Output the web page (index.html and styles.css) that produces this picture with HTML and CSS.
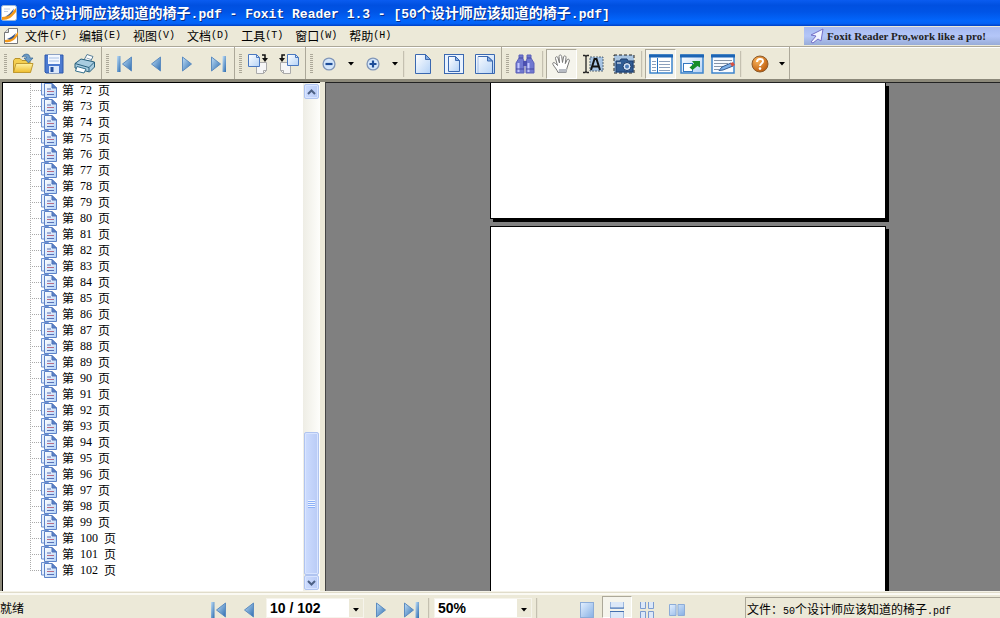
FILE: index.html
```html
<!DOCTYPE html>
<html lang="zh-CN">
<head>
<meta charset="utf-8">
<title>50个设计师应该知道的椅子.pdf - Foxit Reader 1.3</title>
<link rel="stylesheet" href="styles.css">
</head>
<body>
<svg class="defs" aria-hidden="true">
  <defs>
    <linearGradient id="blue" x1="0" y1="0" x2="1" y2="1"><stop offset="0" stop-color="#c0def6"/><stop offset="1" stop-color="#2c6cb0"/></linearGradient>
    <linearGradient id="paper" x1="0" y1="0" x2="1" y2="1"><stop offset="0" stop-color="#ffffff"/><stop offset="1" stop-color="#b4d2f6"/></linearGradient>
    <linearGradient id="gold" x1="0" y1="0" x2="0" y2="1"><stop offset="0" stop-color="#fff3a4"/><stop offset="1" stop-color="#eebc2c"/></linearGradient>
    <linearGradient id="tile" x1="0" y1="0" x2="1" y2="1"><stop offset="0" stop-color="#e4f0ff"/><stop offset="1" stop-color="#86b0e4"/></linearGradient>
    <radialGradient id="amber" cx=".35" cy=".3" r=".8"><stop offset="0" stop-color="#f9b45c"/><stop offset="1" stop-color="#b85404"/></radialGradient>
  </defs>
  <symbol id="logo" viewBox="0 0 16 16"><rect x=".5" y=".5" width="15" height="15" rx="2" fill="#fff" stroke="#9cb6d8"/><path d="M3 4h6M3 6.500h4" stroke="#c2cce0"/><path d="M1 15v-3c6 0 9-3 14-9v4c-4 5-7 8-14 8z" fill="#f49a1c"/><path d="M4 11.500c3-1 6-4 9-8l-1 3c-2 3-5 5-8 5z" fill="#34548c"/></symbol>
  <symbol id="doclogo" viewBox="0 0 16 16"><path d="M1.500 4.500l4-4h9v15h-13z" fill="#fff" stroke="#777"/><path d="M5.500.5v4h-4" fill="#ddd" stroke="#777"/><path d="M2 14v-2c5 0 9-3 13-8v3c-3 5-7 8-13 7z" fill="#f49a1c"/><path d="M4 11c3-1 6-3 9-6l-2 4c-2 2-4 3-7 2z" fill="#34548c"/></symbol>
  <symbol id="pages" viewBox="0 0 16 16"><path d="M.5.5h7l2 2v10.500h-9z" fill="#e6effc" stroke="#6c90d0"/><path d="M3.500 1.500h7.500l4.500 4.500v9.500h-12z" fill="url(#paper)" stroke="#5c82c8"/><path d="M11 1.500v4.500h4.500z" fill="#5c82c8" stroke="#4c72b8"/><path d="M6 7h4M6 12.500h7" stroke="#5870b8"/><path d="M6 9.500h7" stroke="#b86c84"/></symbol>
  <symbol id="open" viewBox="0 0 22 22"><path d="M1.500 19.500v-12l1.500-2h5l2 2h8v12z" fill="#f4cf50" stroke="#b8922c"/><path d="M1.500 19.500l2.500-9h17l-2.500 9z" fill="url(#gold)" stroke="#c09a30"/><path d="M10 4c2-4 8-4 8 1h3l-4.500 5-4.500-5h2.500c0-2-2-2.500-4.500-1z" fill="#6c9cc8" stroke="#346494" stroke-width=".7"/></symbol>
  <symbol id="save" viewBox="0 0 20 20"><path d="M1 1h18v18h-17l-1-1z" fill="#4c7ad0" stroke="#2c58ac"/><rect x="4" y="1" width="12" height="9" fill="#f2f7ff"/><path d="M5 4h10M5 7h10" stroke="#a8c0e4"/><rect x="5" y="12" width="10" height="7" fill="#dce8fa"/><rect x="6.500" y="13" width="3" height="5" fill="#2450a0"/></symbol>
  <symbol id="print" viewBox="0 0 22 20"><path d="M10 6l3-5.500 6 2-2.500 5z" fill="#fff" stroke="#5a8098"/><path d="M12.500 4l4.500 1.500" stroke="#90a8b8"/><path d="M1 9.500l6-4.500 13.500 3v5l-5 5-14.500-4z" fill="#a8cce0" stroke="#28607c"/><path d="M1 9.500l14 4 5.500-5.500" fill="none" stroke="#28607c"/><path d="M15 13.500v4" stroke="#28607c"/><path d="M3 12.500l9 2.500-2 4-8.500-2z" fill="#fff" stroke="#34708c"/></symbol>
  <symbol id="first" viewBox="0 0 16 16"><rect x="0" y="0" width="3.500" height="16" fill="url(#blue)"/><path d="M14.500 1v14l-9-7z" fill="url(#blue)" stroke="#5c8cc0"/></symbol>
  <symbol id="prev" viewBox="0 0 16 16"><path d="M12.500 1v14l-9-7z" fill="url(#blue)" stroke="#5c8cc0"/></symbol>
  <symbol id="next" viewBox="0 0 16 16"><path d="M3.500 1v14l9-7z" fill="url(#blue)" stroke="#5c8cc0"/></symbol>
  <symbol id="last" viewBox="0 0 16 16"><rect x="12.500" y="0" width="3.500" height="16" fill="url(#blue)"/><path d="M1.500 1v14l9-7z" fill="url(#blue)" stroke="#5c8cc0"/></symbol>
  <symbol id="rotr" viewBox="0 0 22 22"><path d="M9.500 9.500h10v8l-3 3h-7z" fill="#f6f6f6" stroke="#aaa"/><path d="M16.500 20.500v-3h3" fill="none" stroke="#aaa"/><path d="M1.500 1.500h8l3 3v9h-11z" fill="url(#paper)" stroke="#4a78c0"/><path d="M9.500 1.500v3h3" fill="none" stroke="#4a78c0"/><path d="M15 2h3v4" fill="none" stroke="#111" stroke-width="1.500"/><path d="M15 5h6l-3 4z" fill="#111"/></symbol>
  <symbol id="rotl" viewBox="0 0 22 22"><path d="M2.500 9.500h10v11h-7l-3-3z" fill="#f6f6f6" stroke="#aaa"/><path d="M2.500 17.500h3v3" fill="none" stroke="#aaa"/><path d="M9.500 1.500h8l3 3v8h-11z" fill="url(#paper)" stroke="#4a78c0"/><path d="M17.500 1.500v3h3" fill="none" stroke="#4a78c0"/><path d="M7 2h-3v4" fill="none" stroke="#111" stroke-width="1.500"/><path d="M1 5h6l-3 4z" fill="#111"/></symbol>
  <symbol id="minus" viewBox="0 0 16 16"><circle cx="8" cy="8" r="6.800" fill="#d4e6fa" stroke="#8096b8" stroke-width="1.500"/><path d="M4 8h8" stroke="#1c4c98" stroke-width="2.500"/></symbol>
  <symbol id="plus" viewBox="0 0 16 16"><circle cx="8" cy="8" r="6.800" fill="#d4e6fa" stroke="#8096b8" stroke-width="1.500"/><path d="M4 8h8M8 4v8" stroke="#1c4c98" stroke-width="2.500"/></symbol>
  <symbol id="actual" viewBox="0 0 20 22"><path d="M2.500 1.500h10l5 5v14h-15z" fill="url(#paper)" stroke="#3a68b0"/><path d="M12.500 1.500v5h5z" fill="#86aee4" stroke="#3a68b0"/></symbol>
  <symbol id="fitpage" viewBox="0 0 20 22"><rect x=".5" y="1.500" width="19" height="19" fill="#e8f2ff" stroke="#3a68b0"/><path d="M4.500 3.500h7l4 4v11h-11z" fill="url(#paper)" stroke="#3a68b0"/><path d="M11.500 3.500v4h4z" fill="#86aee4" stroke="#3a68b0"/></symbol>
  <symbol id="fitwidth" viewBox="0 0 20 22"><path d="M.5 1.500h19v19h-19z" fill="url(#paper)" stroke="#3a68b0"/><path d="M3 3.500h10l4.500 4.500v12" fill="none" stroke="#3a68b0"/><path d="M3 3.500v16.500" stroke="#a8c0e8"/><path d="M12.500 3.500v4.500h5z" fill="#86aee4" stroke="#3a68b0"/></symbol>
  <symbol id="find" viewBox="0 0 20 20"><path d="M4 1h4v4l1 2v12h-8v-10l3-5zM12 1h4v3l3 5v10h-8v-12l1-2z" fill="#7078d0" stroke="#5c60b8"/><path d="M8 7h4v5h-4z" fill="#4c50b0"/><path d="M3.500 9v9M13.500 9v9" stroke="#c4c8ff" stroke-width="2"/><path d="M1 15h8M11 15h8M4 4h4M12 4h4" stroke="#4448a0"/></symbol>
  <symbol id="hand" viewBox="0 0 20 20"><path d="M6 18.500c-1-3-4-6-5-8s1-2.500 2.500-1l2 2-2-7c-.5-2 2-2.500 2.500-.5l1.500 5-.5-6.500c0-2 2.500-2 2.700 0l.8 6 1-5.500c.5-1.800 2.800-1.200 2.500.6l-.7 6 1.700-3.600c1-1.600 3-.6 2.300 1l-2.300 7-1 4.500z" fill="#fff" stroke="#777"/><path d="M7 15h8l-.5 3.500h-8z" fill="#b8bcc4"/></symbol>
  <symbol id="textsel" viewBox="0 0 22 20"><path d="M1 1.500h2l1 1 1-1h2M4 2v16M1 18.500h2l1-1 1 1h2" fill="none" stroke="#222" stroke-width="1.300"/><rect x="8" y="3" width="13" height="14" fill="#a6c4e4" stroke="#567" stroke-dasharray="2 1"/><path d="M9 16l3.500-11h2l3.500 11M11 12.500h6" fill="none" stroke="#111" stroke-width="2"/></symbol>
  <symbol id="snapshot" viewBox="0 0 22 20"><rect x="1" y="1" width="20" height="18" fill="#a8c4e0" stroke="#222" stroke-dasharray="3 2"/><path d="M3 7h4l1-2h6l1 2h5v11h-17z" fill="#305c94" stroke="#1c3c6c"/><circle cx="14" cy="12.500" r="4" fill="#dce8f8" stroke="#183868"/><circle cx="14" cy="12.500" r="2" fill="#4c7cb8"/><path d="M4 9h4" stroke="#fff"/></symbol>
  <symbol id="bookmark" viewBox="0 0 24 20"><rect x="1" y="1" width="22" height="18" fill="#fff" stroke="#3c84cc" stroke-width="1.500"/><path d="M0 2h24" stroke="#1c64b4" stroke-width="3"/><path d="M8.500 4v15" stroke="#2470c0"/><path d="M3 7.500h4M3 10.500h4M3 13.500h4M3 16.500h4M10 7.500h11M10 10.500h11M10 13.500h11M10 16.500h11" stroke="#8ca0bc"/></symbol>
  <symbol id="fullscreen" viewBox="0 0 24 20"><rect x="1" y="1" width="22" height="18" fill="url(#paper)" stroke="#3c84cc" stroke-width="1.500"/><path d="M0 2h24" stroke="#1c64b4" stroke-width="3"/><rect x="3.500" y="9.500" width="9" height="8" fill="#fff" stroke="#3478c0"/><path d="M9.500 13.500l4.500-4-2-2.500h8v6.500l-2.500-1.500-5 4z" fill="#148c28"/></symbol>
  <symbol id="edit" viewBox="0 0 24 20"><rect x="1" y="1" width="22" height="18" fill="#f6faff" stroke="#3c84cc" stroke-width="1.500"/><path d="M0 2h24" stroke="#1c64b4" stroke-width="3"/><path d="M3 6.500h18M3 9.500h14M3 12.500h9M3 15.500h5" stroke="#8494a8"/><path d="M8 16.500l3-3.500 9-4 2 3-10 4z" fill="#7cb0e8" stroke="#345c94"/><path d="M19 9.500l3-1.500 2 3-3 1.500z" fill="#d85040"/></symbol>
  <symbol id="help" viewBox="0 0 18 18"><circle cx="9" cy="9" r="8" fill="url(#amber)" stroke="#8c5c2c"/><path d="M6 7c0-4 6-4 6-.8 0 2.200-3 2.300-3 4.800" fill="none" stroke="#fff" stroke-width="2"/><circle cx="9" cy="13.600" r="1.300" fill="#fff"/></symbol>
  <symbol id="drop" viewBox="0 0 8 4"><path d="M1 0h6l-3 3.500z" fill="#000"/></symbol>
  <symbol id="arrow" viewBox="0 0 14 16"><path d="M13 1l-2 12-3-2-5 4-2-1 5-6-5-1z" fill="#f2f4ff" stroke="#7470c8"/></symbol>
  <symbol id="up" viewBox="0 0 9 6"><path d="M1 5l3.500-3.500 3.500 3.500" fill="none" stroke="#4d6185" stroke-width="2"/></symbol>
  <symbol id="down" viewBox="0 0 9 6"><path d="M1 1l3.500 3.500 3.500-3.500" fill="none" stroke="#4d6185" stroke-width="2"/></symbol>
  <symbol id="single" viewBox="0 0 16 16"><rect x="1.500" y=".5" width="13" height="15" fill="url(#tile)" stroke="#8cacd8"/></symbol>
  <symbol id="contin" viewBox="0 0 16 16"><path d="M1.500 0v6.500h13v-6.500M1.500 16v-6.500h13v6.500" fill="#dce8f8" stroke="#9cb8e0"/><path d="M1 6h14M1 9.500h14" stroke="#4470b0"/></symbol>
  <symbol id="facingc" viewBox="0 0 16 16"><path d="M1.500 0v6.500h5v-6.500M9.500 0v6.500h5v-6.500M1.500 16v-6.500h5v6.500M9.500 16v-6.500h5v6.500" fill="#dce8f8" stroke="#7c9cd0"/></symbol>
  <symbol id="facing" viewBox="0 0 16 16"><path d="M.5 2.500h6.500v11h-6.500zM9 2.500h6.500v11h-6.500z" fill="url(#tile)" stroke="#8cacd8"/></symbol>
</svg>

<header class="titlebar">
  <svg class="i16"><use href="#logo"/></svg>
  <h1>50<span class="zh">个设计师应该知道的椅子</span>.pdf - Foxit Reader 1.3 - [50<span class="zh">个设计师应该知道的椅子</span>.pdf]</h1>
</header>

<nav class="menubar">
  <svg class="i16"><use href="#doclogo"/></svg>
  <button><span class="zh">文件</span>(F)</button>
  <button><span class="zh">编辑</span>(E)</button>
  <button><span class="zh">视图</span>(V)</button>
  <button><span class="zh">文档</span>(D)</button>
  <button><span class="zh">工具</span>(T)</button>
  <button><span class="zh">窗口</span>(W)</button>
  <button><span class="zh">帮助</span>(H)</button>
  <a class="promo" href="#"><svg class="i16"><use href="#arrow"/></svg>Foxit Reader Pro,work like a pro!</a>
</nav>

<div class="toolbar">
  <div class="group">
    <i class="grip"></i>
    <button aria-label="打开"><svg class="i22"><use href="#open"/></svg></button>
    <button aria-label="保存"><svg class="i20"><use href="#save"/></svg></button>
    <button aria-label="打印"><svg class="i22"><use href="#print"/></svg></button>
  </div>
  <div class="group">
    <i class="grip"></i>
    <button aria-label="首页"><svg class="i16"><use href="#first"/></svg></button>
    <button aria-label="上一页"><svg class="i16"><use href="#prev"/></svg></button>
    <button aria-label="下一页"><svg class="i16"><use href="#next"/></svg></button>
    <button aria-label="末页"><svg class="i16"><use href="#last"/></svg></button>
  </div>
  <div class="group">
    <i class="grip"></i>
    <button aria-label="顺时针旋转"><svg class="i22"><use href="#rotr"/></svg></button>
    <button aria-label="逆时针旋转"><svg class="i22"><use href="#rotl"/></svg></button>
  </div>
  <div class="group">
    <i class="grip"></i>
    <button aria-label="缩小"><svg class="i14"><use href="#minus"/></svg></button>
    <button class="more" aria-label="缩小选项"><svg class="caret"><use href="#drop"/></svg></button>
    <button aria-label="放大"><svg class="i14"><use href="#plus"/></svg></button>
    <button class="more" aria-label="放大选项"><svg class="caret"><use href="#drop"/></svg></button>
    <i class="sep"></i>
    <button aria-label="实际大小"><svg class="i22"><use href="#actual"/></svg></button>
    <button aria-label="适合页面"><svg class="i22"><use href="#fitpage"/></svg></button>
    <button aria-label="适合宽度"><svg class="i22"><use href="#fitwidth"/></svg></button>
  </div>
  <div class="group">
    <i class="grip"></i>
    <button aria-label="查找"><svg class="i20"><use href="#find"/></svg></button>
    <i class="sep"></i>
    <button class="on" aria-label="手形工具"><svg class="i20"><use href="#hand"/></svg></button>
    <button aria-label="选择文本"><svg class="i22"><use href="#textsel"/></svg></button>
    <button aria-label="快照"><svg class="i22"><use href="#snapshot"/></svg></button>
    <i class="sep"></i>
    <button class="on" aria-label="书签"><svg class="i24"><use href="#bookmark"/></svg></button>
    <button aria-label="全屏"><svg class="i24"><use href="#fullscreen"/></svg></button>
    <button aria-label="编辑"><svg class="i24"><use href="#edit"/></svg></button>
    <i class="sep"></i>
    <button aria-label="帮助"><svg class="i18"><use href="#help"/></svg></button>
    <button class="more" aria-label="帮助选项"><svg class="caret"><use href="#drop"/></svg></button>
  </div>
</div>

<main class="workspace">
  <aside class="outline">
    <ul class="tree">
      <li><svg class="i16"><use href="#pages"/></svg><span>第</span><b>72</b><span>页</span></li>
      <li><svg class="i16"><use href="#pages"/></svg><span>第</span><b>73</b><span>页</span></li>
      <li><svg class="i16"><use href="#pages"/></svg><span>第</span><b>74</b><span>页</span></li>
      <li><svg class="i16"><use href="#pages"/></svg><span>第</span><b>75</b><span>页</span></li>
      <li><svg class="i16"><use href="#pages"/></svg><span>第</span><b>76</b><span>页</span></li>
      <li><svg class="i16"><use href="#pages"/></svg><span>第</span><b>77</b><span>页</span></li>
      <li><svg class="i16"><use href="#pages"/></svg><span>第</span><b>78</b><span>页</span></li>
      <li><svg class="i16"><use href="#pages"/></svg><span>第</span><b>79</b><span>页</span></li>
      <li><svg class="i16"><use href="#pages"/></svg><span>第</span><b>80</b><span>页</span></li>
      <li><svg class="i16"><use href="#pages"/></svg><span>第</span><b>81</b><span>页</span></li>
      <li><svg class="i16"><use href="#pages"/></svg><span>第</span><b>82</b><span>页</span></li>
      <li><svg class="i16"><use href="#pages"/></svg><span>第</span><b>83</b><span>页</span></li>
      <li><svg class="i16"><use href="#pages"/></svg><span>第</span><b>84</b><span>页</span></li>
      <li><svg class="i16"><use href="#pages"/></svg><span>第</span><b>85</b><span>页</span></li>
      <li><svg class="i16"><use href="#pages"/></svg><span>第</span><b>86</b><span>页</span></li>
      <li><svg class="i16"><use href="#pages"/></svg><span>第</span><b>87</b><span>页</span></li>
      <li><svg class="i16"><use href="#pages"/></svg><span>第</span><b>88</b><span>页</span></li>
      <li><svg class="i16"><use href="#pages"/></svg><span>第</span><b>89</b><span>页</span></li>
      <li><svg class="i16"><use href="#pages"/></svg><span>第</span><b>90</b><span>页</span></li>
      <li><svg class="i16"><use href="#pages"/></svg><span>第</span><b>91</b><span>页</span></li>
      <li><svg class="i16"><use href="#pages"/></svg><span>第</span><b>92</b><span>页</span></li>
      <li><svg class="i16"><use href="#pages"/></svg><span>第</span><b>93</b><span>页</span></li>
      <li><svg class="i16"><use href="#pages"/></svg><span>第</span><b>94</b><span>页</span></li>
      <li><svg class="i16"><use href="#pages"/></svg><span>第</span><b>95</b><span>页</span></li>
      <li><svg class="i16"><use href="#pages"/></svg><span>第</span><b>96</b><span>页</span></li>
      <li><svg class="i16"><use href="#pages"/></svg><span>第</span><b>97</b><span>页</span></li>
      <li><svg class="i16"><use href="#pages"/></svg><span>第</span><b>98</b><span>页</span></li>
      <li><svg class="i16"><use href="#pages"/></svg><span>第</span><b>99</b><span>页</span></li>
      <li><svg class="i16"><use href="#pages"/></svg><span>第</span><b>100</b><span>页</span></li>
      <li><svg class="i16"><use href="#pages"/></svg><span>第</span><b>101</b><span>页</span></li>
      <li><svg class="i16"><use href="#pages"/></svg><span>第</span><b>102</b><span>页</span></li>
    </ul>
    <div class="scrollbar">
      <button aria-label="向上滚动"><svg class="chev"><use href="#up"/></svg></button>
      <div class="track"><div class="thumb"><i></i></div></div>
      <button aria-label="向下滚动"><svg class="chev"><use href="#down"/></svg></button>
    </div>
  </aside>
  <section class="viewer">
    <div class="page tail"></div>
    <div class="page"></div>
  </section>
</main>

<footer class="status">
  <p class="ready">就绪</p>
  <div class="nav">
    <button aria-label="首页"><svg class="i16"><use href="#first"/></svg></button>
    <button aria-label="上一页"><svg class="i16"><use href="#prev"/></svg></button>
    <label class="combo"><select aria-label="页码"><option>10 / 102</option></select><svg class="caret"><use href="#drop"/></svg></label>
    <button aria-label="下一页"><svg class="i16"><use href="#next"/></svg></button>
    <button aria-label="末页"><svg class="i16"><use href="#last"/></svg></button>
    <i class="sep"></i>
    <label class="combo"><select aria-label="缩放"><option>50%</option></select><svg class="caret"><use href="#drop"/></svg></label>
    <i class="sep"></i>
  </div>
  <div class="views">
    <button aria-label="单页"><svg class="i16"><use href="#single"/></svg></button>
    <button class="on" aria-label="连续"><svg class="i16"><use href="#contin"/></svg></button>
    <button aria-label="连续对开"><svg class="i16"><use href="#facingc"/></svg></button>
    <button aria-label="对开"><svg class="i16"><use href="#facing"/></svg></button>
  </div>
  <p class="file"><span class="zh">文件：</span>50<span class="zh">个设计师应该知道的椅子</span>.pdf</p>
</footer>
</body>
</html>
```
FILE: styles.css
```css
* { box-sizing: border-box; }

body {
  margin: 0;
  height: 100vh;
  display: flex;
  flex-direction: column;
  overflow: hidden;
  background: #ece9d8;
  color: #000;
  font: 10px/16px "Liberation Mono", "Noto Sans CJK SC", monospace;
}

h1, p, ul { margin: 0; padding: 0; }
svg { display: block; flex: none; }
.defs { position: absolute; width: 0; height: 0; }

button {
  display: flex;
  align-items: center;
  justify-content: center;
  flex: none;
  margin: 0;
  padding: 0;
  border: 0;
  background: none;
  color: inherit;
  font: inherit;
}

.zh { font-size: 12px; font-family: "Noto Sans CJK SC", sans-serif; }

.i14 { width: 14px; height: 14px; }
.i16 { width: 16px; height: 16px; }
.i18 { width: 18px; height: 18px; }
.i20 { width: 20px; height: 20px; }
.i22 { width: 22px; height: 22px; }
.i24 { width: 24px; height: 20px; }
.caret { width: 8px; height: 4px; }
.chev { width: 9px; height: 6px; }

/* Title bar */
.titlebar {
  flex: none;
  display: flex;
  align-items: center;
  gap: 4px;
  height: 26px;
  padding-left: 1px;
  background: linear-gradient(#0a5cf0, #0050e0 20%, #0054e6 45%, #0266fc 80%, #0262f6 90%, #0040c4);
  color: #fff;
}
.titlebar h1 {
  font-size: 13px;
  line-height: 20px;
  font-weight: bold;
  white-space: pre;
  text-shadow: 1px 1px 0 #0b2f87;
}
.titlebar .zh { font-size: 14px; }

/* Menu bar */
.menubar {
  flex: none;
  display: flex;
  align-items: center;
  gap: 12px;
  height: 20px;
  padding-left: 3px;
}
.menubar > .i16 { margin-right: -6px; }
.promo {
  display: flex;
  align-items: center;
  gap: 2px;
  width: 196px;
  height: 18px;
  margin-left: auto;
  padding-left: 5px;
  background: linear-gradient(#a6baf0, #b4c6f8 50%, #98acd8);
  color: #222;
  font: bold 11px/16px "Liberation Serif", serif;
  text-decoration: none;
  white-space: nowrap;
}

/* Toolbar */
.toolbar {
  flex: none;
  display: flex;
  height: 33px;
  border-top: 1px solid #aca899;
  box-shadow: inset 0 1px #fff;
}
.group {
  display: flex;
  align-items: center;
  padding-top: 1px;
  border-right: 1px solid #aca899;
}
.group button { width: 31px; height: 30px; }
.group .more { width: 13px; }
.grip {
  width: 3px;
  height: 20px;
  margin: 0 0 0 4px;
  background: repeating-linear-gradient(#aca899 0 1px, #ece9d8 1px 2px);
}
.group::after { content: ""; width: 1px; }
.sep {
  flex: none;
  width: 2px;
  height: 26px;
  margin: 0 2px;
  border-left: 1px solid #c4c0b0;
  border-right: 1px solid #e4e0d0;
}
button.on {
  border: 1px solid;
  border-color: #aca899 #fff #fff #aca899;
  background: #f5f4ec;
}

/* Workspace */
.workspace {
  flex: 1;
  min-height: 0;
  display: flex;
  border-top: 3px solid #8c897a;
  border-bottom: 1px solid #f4f2e8;
}
.outline {
  flex: none;
  width: 320px;
  display: flex;
  border-left: 2px solid #8c897a;
  box-shadow: inset 1px 1px #000;
  background: #fff;
  background-clip: padding-box;
  padding: 1px 0 0 1px;
}
.tree {
  flex: 1;
  display: flex;
  flex-direction: column;
  justify-content: flex-end;
  overflow: hidden;
  padding: 0 0 13px 27px;
  list-style: none;
}
.tree li {
  flex: none;
  display: flex;
  align-items: center;
  gap: 6px;
  height: 16px;
  background: repeating-linear-gradient(#aaa 0 1px, #fff 1px 2px) left / 1px 100% no-repeat;
}
.tree li:last-child { background-size: 1px 8px; background-position: left top; }
.tree li::before {
  content: "";
  width: 11px;
  height: 1px;
  margin-right: -6px;
  background: repeating-linear-gradient(90deg, #aaa 0 1px, #fff 1px 2px);
}
.tree .i16 { margin-right: -1px; }
.tree span { font: 12px/16px "Noto Sans CJK SC", sans-serif; }
.tree b { font: 12px/16px "Liberation Serif", serif; }

.scrollbar {
  width: 17px;
  display: flex;
  flex-direction: column;
  padding: 1px;
  background: linear-gradient(90deg, #eeede5, #fefefb);
}
.scrollbar button, .thumb {
  border: 1px solid #b0c4f0;
  border-radius: 2px;
  background: linear-gradient(90deg, #cddcfe, #b9cbf6);
  box-shadow: inset 0 0 0 1px #d8e4ff;
}
.scrollbar button { height: 15px; }
.track { flex: 1; display: flex; flex-direction: column; justify-content: flex-end; }
.thumb { height: 30%; display: flex; align-items: center; justify-content: center; }
.thumb i {
  width: 7px;
  height: 8px;
  background: repeating-linear-gradient(#eef4fe 0 1px, #8cb0f8 1px 2px);
}

.viewer {
  flex: 1;
  display: flex;
  flex-direction: column;
  gap: 7px;
  overflow: hidden;
  margin-left: 5px;
  padding-left: 164px;
  border-left: 1px solid #444;
  border-top: 1px solid #222;
  background: #808080;
}
.page {
  flex: none;
  width: 396px;
  height: 560px;
  border: 1px solid #000;
  background: #fff;
  box-shadow: 3px 3px 0 #000;
}
.tail { height: 136px; border-top: 0; }

/* Status bar */
.status {
  flex: none;
  display: flex;
  align-items: stretch;
  height: 26px;
  padding-top: 3px;
  border-top: 1px solid #e0dcca;
  box-shadow: inset 0 2px #fbfaf4;
}
.ready { width: 204px; padding-top: 6px; font-size: 12px; }
.nav { display: flex; align-items: stretch; padding-top: 2px; }
.nav button { width: 30px; padding-top: 4px; }
.nav .sep { height: auto; margin: 0 2px; }
.combo {
  position: relative;
  display: flex;
  width: 98px;
  margin: 0 2px;
  border: 1px solid #f6f4ec;
}
.combo select {
  appearance: none;
  flex: 1;
  padding: 0 18px 0 3px;
  border: 0;
  border-radius: 0;
  background: linear-gradient(90deg, #fff calc(100% - 14px), #ece9d8 0);
  color: #000;
  font: bold 14px/18px "Liberation Sans", sans-serif;
}
.combo .caret { position: absolute; right: 3px; top: 9px; pointer-events: none; }
.views { display: flex; margin-left: 32px; }
.views button { width: 30px; padding-top: 6px; }
.file {
  flex: 1;
  margin: 1px 0 0 53px;
  padding: 3px 0 0 1px;
  border-top: 1px solid #aca899;
  border-left: 1px solid #aca899;
  white-space: nowrap;
}
```
